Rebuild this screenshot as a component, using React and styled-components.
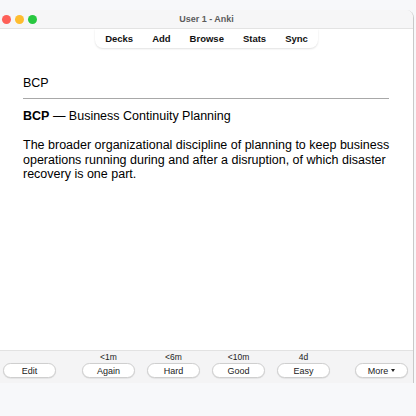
import React from 'react';
import styled, { createGlobalStyle } from 'styled-components';

const GlobalStyle = createGlobalStyle`
  html, body {
    margin: 0;
    padding: 0;
    background: #f7f8fa;
    font-family: "Liberation Sans", Arial, sans-serif;
  }
`;

const Page = styled.div`
  width: 416px;
  height: 416px;
  padding-top: 10px;
  box-sizing: border-box;
  overflow: hidden;
`;

const Window = styled.div`
  width: 414px;
  height: 373px;
  display: flex;
  flex-direction: column;
  background: #ffffff;
  border-right: 1px solid #c9c9c9;
  border-top-right-radius: 8px;
  box-sizing: border-box;
  overflow: hidden;
`;

const TitleBar = styled.div`
  height: 18px;
  flex: none;
  position: relative;
  display: flex;
  align-items: center;
  justify-content: center;
  background: #f6f6f7;
  border-bottom: 1px solid #e3e3e3;
  font-size: 9px;
  font-weight: bold;
  color: #5c5c5c;
`;

const Lights = styled.div`
  position: absolute;
  left: 2px;
  top: 5px;
  display: flex;
  gap: 4px;
`;

const Light = styled.span`
  width: 9px;
  height: 9px;
  border-radius: 50%;
  background: ${({ color }) => color};
`;

const Nav = styled.nav`
  align-self: flex-start;
  margin-left: 95px;
  width: 223px;
  height: 19px;
  display: flex;
  align-items: center;
  justify-content: center;
  gap: 19px;
  background: #ffffff;
  border-radius: 0 0 8px 8px;
  box-shadow: 0 1px 2px rgba(0, 0, 0, 0.12);
  font-size: 9.5px;
  font-weight: bold;
  color: #111;
`;

const Card = styled.div`
  flex: 1;
  padding: 28px 14px 0 23px;
  font-size: 12.5px;
  line-height: 14.4px;
  color: #000;
`;

const Front = styled.div``;

const Rule = styled.hr`
  margin: 8px 10px 10px 0;
  border: none;
  border-top: 1px solid #a8a8a8;
`;

const Term = styled.div`
  margin-bottom: 14.4px;
`;

const Paragraph = styled.p`
  margin: 0;
`;

const BottomBar = styled.div`
  height: 33px;
  flex: none;
  display: flex;
  align-items: flex-end;
  padding: 0 5px 5px 3px;
  background: #f4f4f5;
  border-top: 1px solid #e2e2e2;
  box-sizing: border-box;
`;

const Group = styled.div`
  display: flex;
  flex-direction: column;
  align-items: center;
  margin-left: ${({ gap }) => gap}px;
`;

const Due = styled.span`
  font-size: 8.5px;
  line-height: 11px;
  color: #222;
`;

const Button = styled.button`
  width: 53px;
  height: 15px;
  padding: 0;
  border: 1px solid #cfcfcf;
  border-radius: 8px;
  background: #ffffff;
  box-shadow: 0 0.5px 1px rgba(0, 0, 0, 0.12);
  font-family: "Liberation Sans", Arial, sans-serif;
  font-size: 9px;
  color: #222;
  display: flex;
  align-items: center;
  justify-content: center;
  gap: 3px;
`;

const Caret = styled.span`
  width: 0;
  height: 0;
  border-left: 2.5px solid transparent;
  border-right: 2.5px solid transparent;
  border-top: 3px solid #222;
`;

const answers = [
  { label: 'Again', due: '<1m', gap: 26 },
  { label: 'Hard', due: '<6m', gap: 12 },
  { label: 'Good', due: '<10m', gap: 12 },
  { label: 'Easy', due: '4d', gap: 12 },
];

export default function App() {
  return (
    <>
      <GlobalStyle />
      <Page>
        <Window>
          <TitleBar>
            <Lights>
              <Light color="#fe5f57" />
              <Light color="#febc2e" />
              <Light color="#28c840" />
            </Lights>
            User 1 - Anki
          </TitleBar>
          <Nav>
            <span>Decks</span>
            <span>Add</span>
            <span>Browse</span>
            <span>Stats</span>
            <span>Sync</span>
          </Nav>
          <Card>
            <Front>BCP</Front>
            <Rule />
            <Term>
              <b>BCP</b> — Business Continuity Planning
            </Term>
            <Paragraph>
              The broader organizational discipline of planning to keep business
              operations running during and after a disruption, of which disaster
              recovery is one part.
            </Paragraph>
          </Card>
          <BottomBar>
            <Group gap={0}>
              <Button>Edit</Button>
            </Group>
            {answers.map((a) => (
              <Group key={a.label} gap={a.gap}>
                <Due>{a.due}</Due>
                <Button>{a.label}</Button>
              </Group>
            ))}
            <Group gap={25}>
              <Button>
                More <Caret />
              </Button>
            </Group>
          </BottomBar>
        </Window>
      </Page>
    </>
  );
}
